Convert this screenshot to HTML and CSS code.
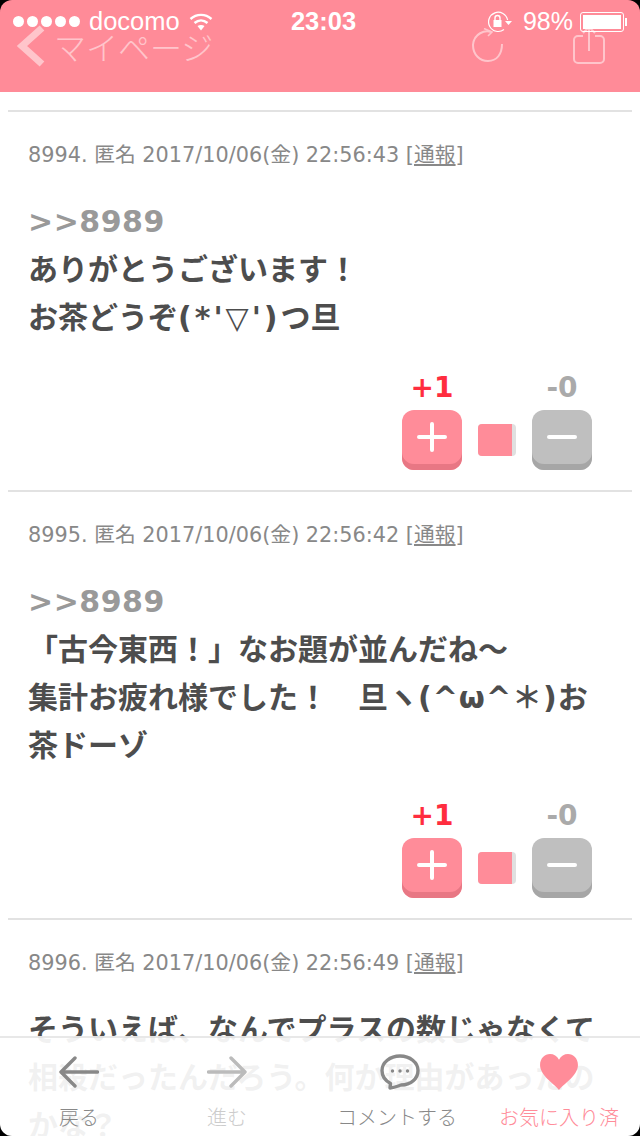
FILE: index.html
```html
<!DOCTYPE html>
<html lang="ja">
<head>
    <meta charset="UTF-8">
    <meta name="viewport" content="width=device-width, initial-scale=1.0">
    <title>コメント</title>
    <link rel="stylesheet" href="styles.css">
</head>
<body>
    <div class="screen">
        <header class="header">
            <!-- ステータスバー -->
            <div class="status-bar">
                <div class="status-left">
                    <span class="signal"><i></i><i></i><i></i><i></i><i></i></span>
                    <span>docomo</span>
                    <svg class="wifi" width="24" height="18" viewBox="0 0 24 18">
                        <path d="M1.5 6C7.5 0.5 16.5 0.5 22.5 6" fill="none" stroke="#fff" stroke-width="2.4"/>
                        <path d="M5.5 10C9.5 6.5 14.5 6.5 18.5 10" fill="none" stroke="#fff" stroke-width="2.4"/>
                        <path d="M8.5 13L12 17.5L15.5 13C13.5 11.5 10.5 11.5 8.5 13Z" fill="#fff"/>
                    </svg>
                </div>
                <div class="status-time">23:03</div>
                <div class="status-right">
                    <svg class="rotation-lock" width="24" height="22" viewBox="0 0 24 22">
                        <path d="M16 18.5A9.6 9.6 0 1 1 19.6 9" fill="none" stroke="#fff" stroke-width="1.2"/>
                        <path d="M17 10L24 10L20.5 14Z" fill="#fff"/>
                        <rect x="5.5" y="9" width="8" height="7" fill="#fff"/>
                        <path d="M7 9V7A2.5 2.5 0 0 1 12 7V9" fill="none" stroke="#fff" stroke-width="1.4"/>
                    </svg>
                    <span class="battery-num">98%</span>
                    <span class="battery"><span class="battery-fill"></span></span>
                </div>
            </div>
            <!-- ナビ -->
            <nav class="nav">
                <a class="nav-back">
                    <svg width="30" height="42" viewBox="0 0 30 42">
                        <path d="M26 3L6 21L26 39" fill="none" stroke="#fff" stroke-width="7"/>
                    </svg>
                    <span>マイページ</span>
                </a>
                <div class="nav-actions">
                    <svg class="reload" width="34" height="36" viewBox="0 0 34 36">
                        <path d="M20 4C14 2 3 5 2 17C2 27 9 33 17 33C26 33 31 26 31 16" fill="none" stroke="#fff" stroke-width="2"/>
                        <path d="M13 0.5L21 4L17 8" fill="none" stroke="#fff" stroke-width="1.6"/>
                    </svg>
                    <svg class="share" width="34" height="38" viewBox="0 0 34 38">
                        <path d="M11 9H6A4 4 0 0 0 2 13V32A4 4 0 0 0 6 36H28A4 4 0 0 0 32 32V13A4 4 0 0 0 28 9H23" fill="none" stroke="#fff" stroke-width="2"/>
                        <path d="M17 0V24M11 6L17 0L23 6" fill="none" stroke="#fff" stroke-width="2"/>
                    </svg>
                </div>
            </nav>
        </header>

        <main class="list">
            <!-- 8994 -->
            <article class="post">
                <p class="post-meta">8994. 匿名 2017/10/06(金) 22:56:43 [<a>通報</a>]</p>
                <div class="post-body">
                    <p class="anchor">&gt;&gt;8989</p>
                    <p>ありがとうございます！</p>
                    <p>お茶どうぞ<span class="kao-wide">(*'▽')</span>つ旦</p>
                </div>
                <div class="votes">
                    <span class="vote-num plus">+1</span>
                    <span></span>
                    <span class="vote-num minus">-0</span>
                    <button class="vote-btn plus-btn"><svg width="32" height="32" viewBox="0 0 32 32"><path d="M3 16H29M16 3V29" stroke="#fff" stroke-width="4" stroke-linecap="round"/></svg></button>
                    <span class="ratio"><span class="ratio-fill" style="width: 90%"></span></span>
                    <button class="vote-btn minus-btn"><svg width="32" height="32" viewBox="0 0 32 32"><path d="M3 16H29" stroke="#fff" stroke-width="4" stroke-linecap="round"/></svg></button>
                </div>
            </article>

            <!-- 8995 -->
            <article class="post">
                <p class="post-meta">8995. 匿名 2017/10/06(金) 22:56:42 [<a>通報</a>]</p>
                <div class="post-body">
                    <p class="anchor">&gt;&gt;8989</p>
                    <p>「古今東西！」なお題が並んだね～</p>
                    <p>集計お疲れ様でした！　旦ヽ<span class="kao">(^ω^＊)</span>お茶ドーゾ</p>
                </div>
                <div class="votes">
                    <span class="vote-num plus">+1</span>
                    <span></span>
                    <span class="vote-num minus">-0</span>
                    <button class="vote-btn plus-btn"><svg width="32" height="32" viewBox="0 0 32 32"><path d="M3 16H29M16 3V29" stroke="#fff" stroke-width="4" stroke-linecap="round"/></svg></button>
                    <span class="ratio"><span class="ratio-fill" style="width: 90%"></span></span>
                    <button class="vote-btn minus-btn"><svg width="32" height="32" viewBox="0 0 32 32"><path d="M3 16H29" stroke="#fff" stroke-width="4" stroke-linecap="round"/></svg></button>
                </div>
            </article>

            <!-- 8996 -->
            <article class="post">
                <p class="post-meta">8996. 匿名 2017/10/06(金) 22:56:49 [<a>通報</a>]</p>
                <div class="post-body">
                    <p>そういえば、なんでプラスの数じゃなくて相殺だったんだろう。何か理由があったのかな？</p>
                </div>
            </article>
        </main>

        <!-- 下のツールバー -->
        <footer class="toolbar">
            <a class="tool">
                <svg width="40" height="32" viewBox="0 0 40 32"><path d="M38.5 16H3M16 2L2 16L16 30" fill="none" stroke="#888" stroke-width="3.4" stroke-linecap="round" stroke-linejoin="round"/></svg>
                <span>戻る</span>
            </a>
            <a class="tool tool-off">
                <svg width="40" height="32" viewBox="0 0 40 32"><path d="M1.5 16H37M24 2L38 16L24 30" fill="none" stroke="#bbb" stroke-width="3.4" stroke-linecap="round" stroke-linejoin="round"/></svg>
                <span>進む</span>
            </a>
            <a class="tool tool-comment">
                <svg width="40" height="36" viewBox="0 0 40 36">
                    <path d="M20 2C10 2 2 8.5 2 16.5C2 22.5 6 27 10.5 29.5L10 34C15 33.5 18 32 21 31C31 31 38 24.5 38 16.5C38 8.5 30 2 20 2Z" fill="none" stroke="#888" stroke-width="3.4" stroke-linejoin="round"/>
                    <circle cx="12.5" cy="17" r="1.7" fill="#888"/><circle cx="20" cy="17" r="1.7" fill="#888"/><circle cx="27.5" cy="17" r="1.7" fill="#888"/>
                </svg>
                <span>コメントする</span>
            </a>
            <a class="tool tool-fav">
                <svg width="40" height="36" viewBox="0 0 42 38"><path d="M21 38C17 32 1 23 1 11.5C1 4.5 6 0 11.5 0C15.5 0 19 2 21 6C23 2 26.5 0 30.5 0C36 0 41 4.5 41 11.5C41 23 25 32 21 38Z" fill="#ff8c99"/></svg>
                <span>お気に入り済</span>
            </a>
        </footer>

        <div class="corners"></div>
    </div>
</body>
</html>
```

FILE: styles.css
```css
* {
    margin: 0;
    padding: 0;
    box-sizing: border-box;
}

html, body {
    width: 640px;
    height: 1136px;
    overflow: hidden;
}

body {
    font-family: "DejaVu Sans", "Noto Sans CJK JP", sans-serif;
    background-color: white;
}

.screen {
    position: relative;
    width: 640px;
    height: 1136px;
    overflow: hidden;
}

.header {
    position: relative;
    height: 92px;
    padding: 25px 34px 0 16px;
    background-color: #ff8b98;
}

.status-bar {
    position: absolute;
    top: 7px;
    left: 13px;
    right: 6px;
    height: 26px;
    display: grid;
    grid-template-columns: 1fr auto 1fr;
    align-items: center;
    color: white;
    font-family: "Liberation Sans", sans-serif;
    font-size: 25.5px;
}

.status-left {
    display: flex;
    align-items: center;
    gap: 9px;
}

.signal {
    display: flex;
    gap: 3px;
}

.signal i {
    width: 11px;
    height: 11px;
    border-radius: 50%;
    background-color: white;
}

.status-time {
    font-weight: bold;
}

.status-right {
    display: flex;
    align-items: center;
    justify-content: flex-end;
    padding-right: 10px;
}

.rotation-lock {
    margin-right: 11px;
}

.battery-num {
    margin-right: 7px;
    font-size: 25px;
}

.battery {
    position: relative;
    width: 44px;
    height: 20px;
    padding: 2px;
    border: 1px solid white;
    border-radius: 3px;
}

.battery::after {
    content: "";
    position: absolute;
    top: 5px;
    right: -4px;
    width: 2px;
    height: 8px;
    background-color: white;
}

.battery-fill {
    display: block;
    height: 100%;
    background-color: white;
}

.nav {
    display: flex;
    justify-content: space-between;
    align-items: flex-start;
    opacity: 0.5;
    color: white;
}

.nav-back {
    display: flex;
    align-items: center;
    gap: 8px;
    font-family: "Noto Sans CJK JP", sans-serif;
    font-weight: 300;
    font-size: 32px;
    line-height: 42px;
}

.nav-actions {
    display: flex;
    align-items: flex-start;
    gap: 67px;
}

.reload {
    margin-top: 3px;
}

.share {
    margin-top: 2px;
}

.list {
    padding: 18px 8px 0;
}

.post {
    padding: 28px 20px 20px;
    border-top: 2px solid #e2e2e2;
}

.post-meta {
    font-size: 20.8px;
    line-height: 30px;
    color: #888;
}

.post-meta a {
    text-decoration: underline;
}

.post-body {
    margin-top: 28px;
    padding-right: 8px;
    font-size: 30px;
    font-weight: bold;
    line-height: 48px;
    color: #4d4d4d;
}

.anchor {
    color: #999;
    font-size: 30px;
    letter-spacing: 0.5px;
}

.kao {
    letter-spacing: 1px;
}

.kao-wide {
    letter-spacing: 3px;
}

.votes {
    display: grid;
    grid-template-columns: 60px 70px 60px;
    grid-template-rows: 32px 60px;
    row-gap: 6px;
    justify-content: end;
    justify-items: center;
    align-items: center;
    margin: 30px 0 0;
    padding-right: 20px;
}

.vote-num {
    font-size: 28px;
    font-weight: bold;
    line-height: 32px;
}

.plus {
    color: #ff2d3f;
}

.minus {
    color: #aaa;
}

.vote-btn {
    display: flex;
    align-items: center;
    justify-content: center;
    width: 60px;
    height: 60px;
    padding-bottom: 6px;
    border: none;
    border-radius: 12px;
}

.plus-btn {
    background-color: #ff8c99;
    box-shadow: inset 0 -6px 0 #e87784;
}

.minus-btn {
    background-color: #bfbfbf;
    box-shadow: inset 0 -6px 0 #a6a6a6;
}

.ratio {
    width: 38px;
    height: 32px;
    border-radius: 4px;
    overflow: hidden;
    background-color: #e0e0e0;
}

.ratio-fill {
    display: block;
    height: 100%;
    background-color: #ff8c99;
}

.toolbar {
    position: absolute;
    left: 0;
    right: 0;
    bottom: 0;
    height: 100px;
    display: grid;
    grid-template-columns: 158px 138px 202px 122px;
    padding-top: 16px;
    border-top: 2px solid rgba(210, 210, 210, 0.5);
    background-color: rgba(255, 255, 255, 0.92);
    font-family: "Noto Sans CJK JP", sans-serif;
    font-weight: 300;
    font-size: 20px;
    color: #888;
}

.tool {
    display: flex;
    flex-direction: column;
    align-items: center;
    line-height: 30px;
    white-space: nowrap;
}

.tool svg {
    height: 36px;
    margin-bottom: 12px;
}

.tool-comment svg {
    margin-left: 5px;
}

.tool-off {
    color: #ccc;
}

.tool-fav {
    color: #ff8c99;
}

.corners {
    position: absolute;
    inset: 0;
    border-radius: 12px;
    box-shadow: 0 0 0 12px black;
    pointer-events: none;
}
```
